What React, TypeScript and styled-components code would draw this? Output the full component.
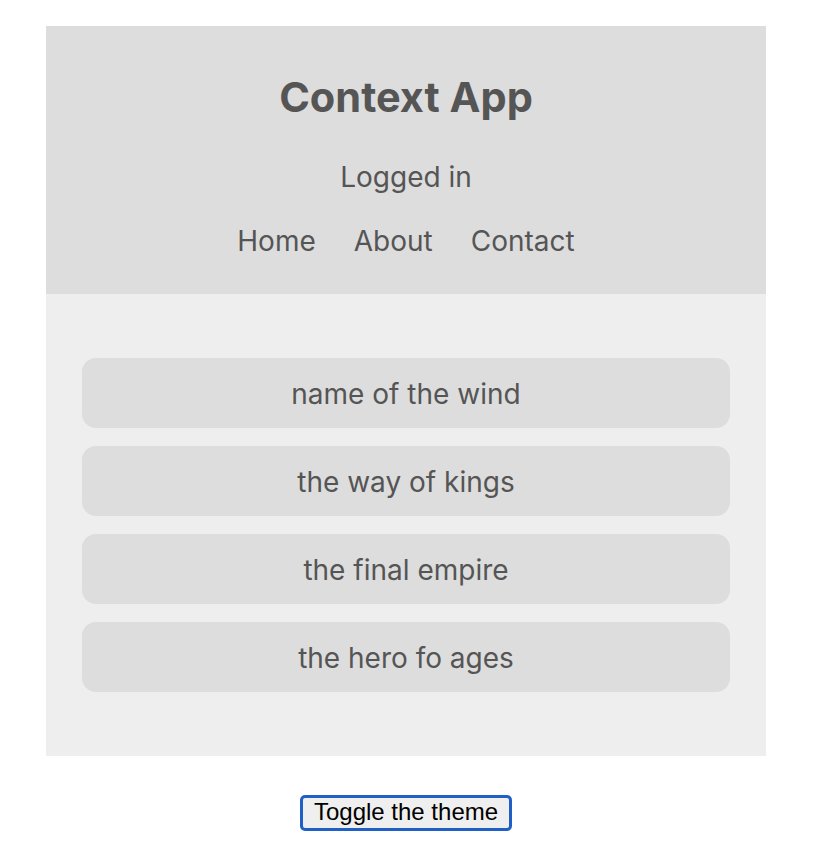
import React, { useState } from "react";
import styled, { createGlobalStyle } from "styled-components";

const Global = createGlobalStyle`
  html, body { margin: 0; padding: 0; background: #fff; }
  body { font-family: Inter, "Noto Sans", sans-serif; }
`;

const Page = styled.div`
  padding: 26px 0 0 46px;
`;

const Container = styled.div`
  width: 720px;
  display: flex;
  flex-direction: column;
`;

const Header = styled.header`
  background: #ddd;
  height: 268px;
  box-sizing: border-box;
  padding-top: 46px;
  display: flex;
  flex-direction: column;
  align-items: center;
  color: #555;
`;

const Title = styled.h1`
  margin: 0;
  font-size: 41.5px;
  font-weight: 700;
  line-height: 50px;
`;

const Status = styled.div`
  margin-top: 38px;
  font-size: 28px;
  line-height: 34px;
`;

const Nav = styled.ul`
  list-style: none;
  display: flex;
  gap: 38px;
  margin: 30px 0 0;
  padding: 0;
  font-size: 28px;
  line-height: 34px;
`;

const NavItem = styled.li``;

const BookList = styled.ul`
  list-style: none;
  margin: 0;
  background: #eee;
  padding: 64px 36px;
  display: flex;
  flex-direction: column;
  gap: 18px;
`;

const Book = styled.li`
  height: 70px;
  border-radius: 14px;
  background: #ddd;
  color: #555;
  font-size: 28px;
  line-height: 34px;
  padding-top: 2px;
  box-sizing: border-box;
  display: flex;
  align-items: center;
  justify-content: center;
`;

const Footer = styled.div`
  width: 720px;
  display: flex;
  justify-content: center;
  padding-top: 39px;
`;

const ToggleButton = styled.button`
  font-family: "Liberation Sans", Arial, sans-serif;
  font-size: 24px;
  color: #000;
  background: #efefef;
  border: 3px solid #2060c6;
  border-radius: 5px;
  padding: 0 11px 2px;
  outline: none;
  height: 36px;
  white-space: nowrap;
  line-height: 28px;
`;

const books = ["name of the wind", "the way of kings", "the final empire", "the hero fo ages"];

export default function App() {
  const [light, setLight] = useState(true);
  return (
    <Page>
      <Global />
      <Container>
        <Header>
          <Title>Context App</Title>
          <Status>Logged in</Status>
          <Nav>
            <NavItem>Home</NavItem>
            <NavItem>About</NavItem>
            <NavItem>Contact</NavItem>
          </Nav>
        </Header>
        <BookList>
          {books.map((b) => (
            <Book key={b}>{b}</Book>
          ))}
        </BookList>
      </Container>
      <Footer>
        <ToggleButton onClick={() => setLight(!light)}>Toggle the theme</ToggleButton>
      </Footer>
    </Page>
  );
}
